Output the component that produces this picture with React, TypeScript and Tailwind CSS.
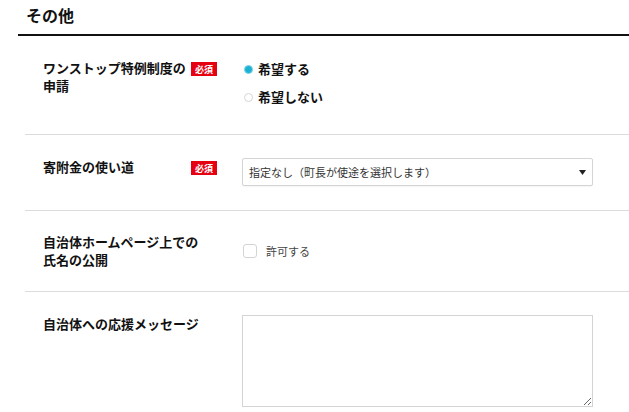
import React from "react";

const Badge = () => (
  <span className="mt-[3px] inline-flex h-[14px] w-[26px] shrink-0 items-center justify-center bg-[#e50012] text-[9px] font-bold leading-none text-white">
    必須
  </span>
);

export default function App() {
  return (
    <div
      className="w-[629px] h-[412px] overflow-hidden bg-white pl-[18px] text-[#111]"
      style={{ fontFamily: '"Noto Sans CJK JP", "Noto Sans", sans-serif' }}
    >
      <div className="pl-[8px] pt-[5px] pb-[9px] text-[16px] font-bold leading-[20px]">その他</div>
      <div className="h-[2px] bg-[#111]" />
      <div className="ml-[7px]">
        {/* Row 1 */}
        <div className="flex border-b border-[#dcdcdc] pl-[18px] pt-[23px] pb-[27px]">
          <div className="flex w-[199px] shrink-0 items-start">
            <div className="w-[148px] text-[13px] font-bold leading-[18px]">
              ワンストップ特例制度の
              <br />
              申請
            </div>
            <Badge />
          </div>
          <div className="flex flex-col gap-[8px]">
            <label className="flex h-[20px] items-center gap-[5px] pl-[2px]">
              <span className="h-[9px] w-[9px] rounded-full border border-[#7fd3e6] bg-[#1cb0d2]" />
              <span className="text-[13px] font-bold">希望する</span>
            </label>
            <label className="flex h-[20px] items-center gap-[5px] pl-[2px]">
              <span className="h-[9px] w-[9px] rounded-full border border-[#d6d6d6] bg-white" />
              <span className="text-[13px] font-bold">希望しない</span>
            </label>
          </div>
        </div>
        {/* Row 2 */}
        <div className="flex border-b border-[#dcdcdc] pl-[18px] pt-[23px] pb-[24px]">
          <div className="flex w-[199px] shrink-0 items-start">
            <div className="w-[148px] text-[13px] font-bold leading-[17px]">寄附金の使い道</div>
            <Badge />
          </div>
          <div className="flex h-[28px] w-[351px] items-center justify-between rounded-[2px] border border-[#d4d4d4] bg-white pl-[6px] pr-[6px] shadow-[0_1px_1px_rgba(0,0,0,0.04)]">
            <span className="text-[11px] text-[#333]">指定なし（町長が使途を選択します）</span>
            <svg width="7" height="5" viewBox="0 0 7 5">
              <path d="M0 0 H7 L3.5 5 Z" fill="#222" />
            </svg>
          </div>
        </div>
        {/* Row 3 */}
        <div className="flex border-b border-[#dcdcdc] pl-[18px] pt-[22px] pb-[22px]">
          <div className="flex w-[199px] shrink-0 items-start">
            <div className="text-[13px] font-bold leading-[18px]">
              自治体ホームページ上での
              <br />
              氏名の公開
            </div>
          </div>
          <label className="flex h-[36px] items-center gap-[9px] pl-[1px]">
            <span className="h-[14px] w-[14px] rounded-[3px] border border-[#d4d4d4] bg-white" />
            <span className="text-[11px] text-[#444]">許可する</span>
          </label>
        </div>
        {/* Row 4 */}
        <div className="flex pl-[18px] pt-[23px]">
          <div className="flex w-[199px] shrink-0 items-start">
            <div className="text-[13px] font-bold leading-[17px]">自治体への応援メッセージ</div>
          </div>
          <textarea className="h-[92px] w-[351px] border border-[#d4d4d4] bg-white outline-none" />
        </div>
      </div>
    </div>
  );
}
